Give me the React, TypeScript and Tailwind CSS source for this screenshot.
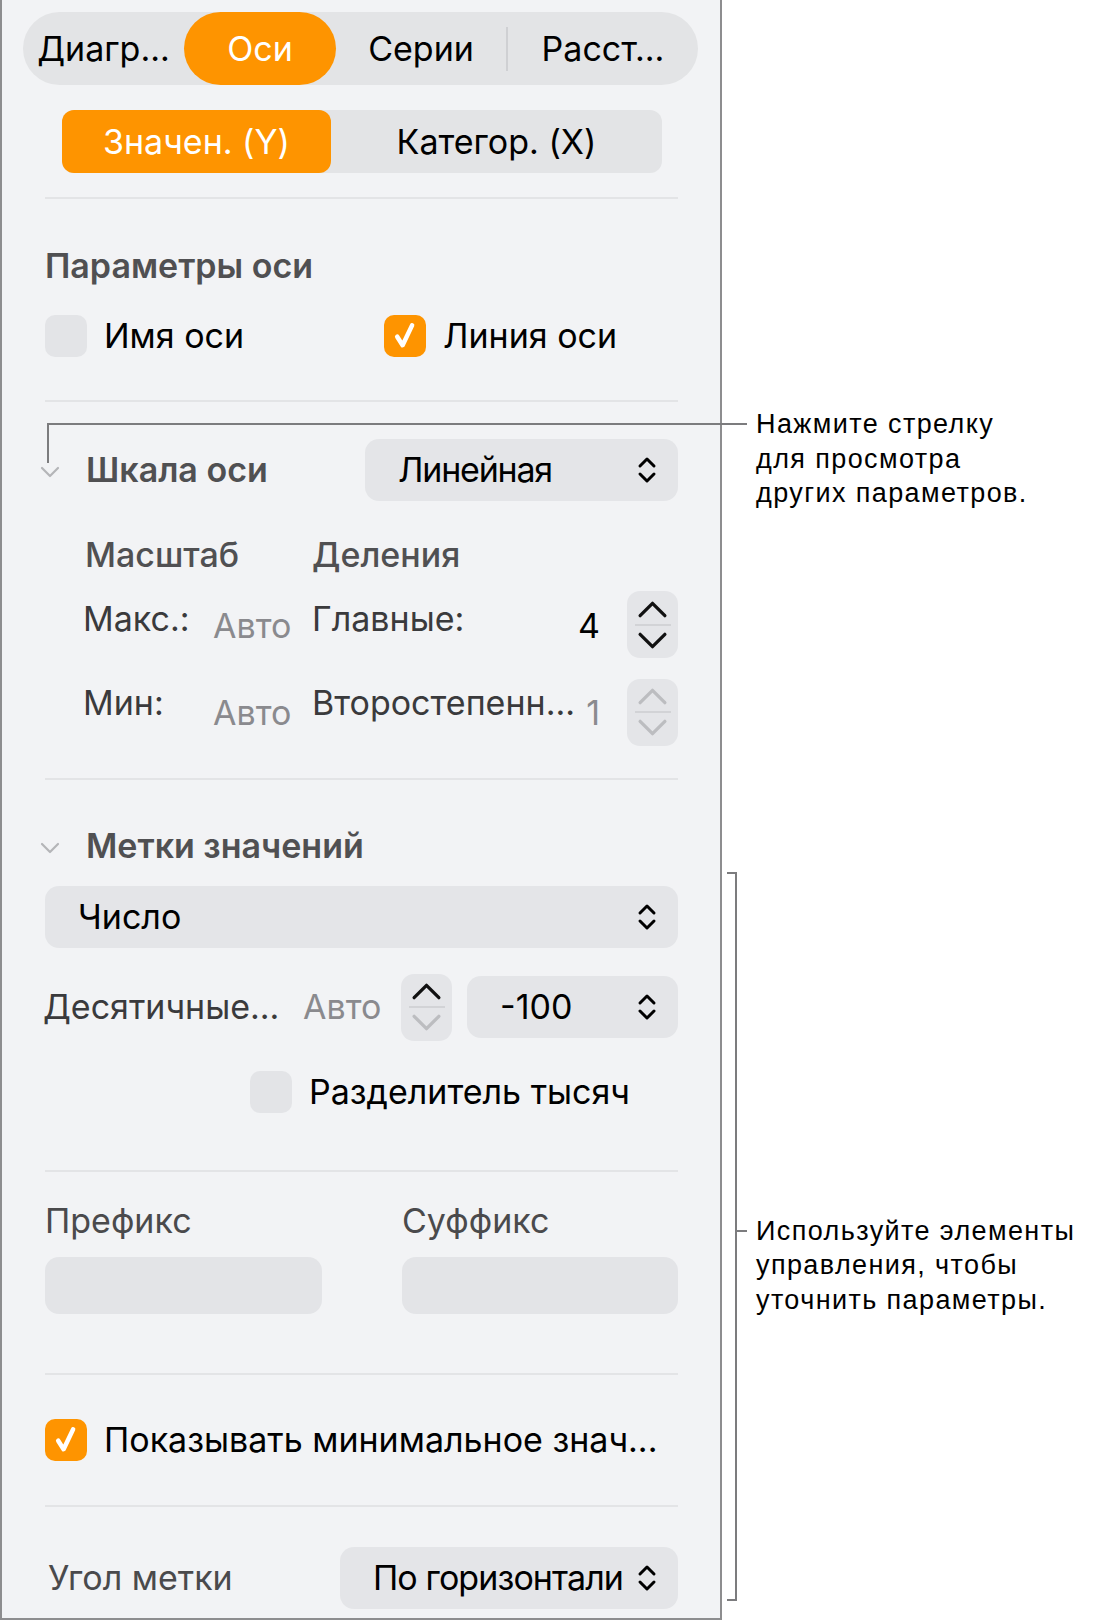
import type { ReactNode } from "react"

const PANEL_FONT = 'Inter, "Noto Sans", sans-serif'
const NOTE_FONT = '"Liberation Sans", Arial, sans-serif'

function UpDownIcon() {
  return (
    <svg
      viewBox="0 0 22 32"
      className="h-[32px] w-[22px] shrink-0"
      fill="none"
      stroke="currentColor"
      strokeWidth={3}
      strokeLinecap="round"
      strokeLinejoin="round"
    >
      <path d="M4 12 L11 5 L18 12" />
      <path d="M4 20 L11 27 L18 20" />
    </svg>
  )
}

function Disclosure() {
  return (
    <svg
      viewBox="0 0 22 14"
      className="h-[14px] w-[22px] shrink-0"
      fill="none"
      stroke="#b4b5b8"
      strokeWidth={2.2}
      strokeLinecap="round"
      strokeLinejoin="round"
    >
      <path d="M3 3 L11 11 L19 3" />
    </svg>
  )
}

function Stepper({ upDim = false, downDim = false }: { upDim?: boolean; downDim?: boolean }) {
  return (
    <div className="flex h-[67px] w-[51px] shrink-0 flex-col items-center justify-center rounded-[13px] bg-[#e4e5e8]">
      <svg
        viewBox="0 0 32 18"
        className="h-[19px] w-[33px]"
        fill="none"
        stroke={upDim ? "#bcbdc0" : "#111"}
        strokeWidth={3.2}
        strokeLinecap="round"
        strokeLinejoin="round"
      >
        <path d="M4 15 L16 3 L28 15" />
      </svg>
      <div className="my-[5px] h-[2px] w-[36px] bg-[#d2d3d6]" />
      <svg
        viewBox="0 0 32 18"
        className="h-[19px] w-[33px]"
        fill="none"
        stroke={downDim ? "#bcbdc0" : "#111"}
        strokeWidth={3.2}
        strokeLinecap="round"
        strokeLinejoin="round"
      >
        <path d="M4 3 L16 15 L28 3" />
      </svg>
    </div>
  )
}

function Checkbox({ checked = false }: { checked?: boolean }) {
  if (!checked) {
    return <span className="block h-[42px] w-[42px] shrink-0 rounded-[10px] bg-[#e3e4e7]" />
  }
  return (
    <span className="flex h-[42px] w-[42px] shrink-0 items-center justify-center rounded-[10px] bg-[#fe9400]">
      <svg
        viewBox="0 0 24 24"
        className="h-[34px] w-[34px]"
        fill="none"
        stroke="white"
        strokeWidth={3.2}
        strokeLinecap="round"
        strokeLinejoin="round"
      >
        <path d="M6.5 12.5 L10.3 18.5 L17 4.5" />
      </svg>
    </span>
  )
}

function Select({
  label,
  className = "",
  labelClassName = "",
}: {
  label: string
  className?: string
  labelClassName?: string
}) {
  return (
    <div
      className={`flex h-[62px] shrink-0 items-center justify-between rounded-[14px] bg-[#e4e5e8] pl-[33px] pr-[20px] text-black ${className}`}
    >
      <span className={`whitespace-nowrap ${labelClassName}`}>{label}</span>
      <UpDownIcon />
    </div>
  )
}

function Divider({ className = "" }: { className?: string }) {
  return <div className={`h-[2px] bg-[#e3e4e6] ${className}`} />
}

function Note({ children, className = "" }: { children: ReactNode; className?: string }) {
  return (
    <p
      className={`whitespace-nowrap text-[27px] leading-[34.5px] tracking-[1.4px] text-black ${className}`}
      style={{ fontFamily: NOTE_FONT }}
    >
      {children}
    </p>
  )
}

export default function App() {
  return (
    <div className="relative flex h-[1620px] w-[1101px] bg-white">
      {/* inspector panel */}
      <div
        className="flex h-[1620px] w-[722px] shrink-0 flex-col border-b-2 border-l-2 border-r-2 border-[#8d8d8f] bg-[#f2f3f5] pl-[43px] pr-[42px] text-[34px] leading-none"
        style={{ fontFamily: PANEL_FONT }}
      >
        {/* top tabs */}
        <div className="-ml-[22px] -mr-[20px] mt-[12px] flex h-[73px] items-center rounded-full bg-[#e3e4e6] text-black">
          <div className="flex w-[161px] justify-center">Диагр...</div>
          <div className="flex h-[73px] w-[152px] items-center justify-center rounded-full bg-[#fe9400] text-white">
            Оси
          </div>
          <div className="flex w-[170px] justify-center">Серии</div>
          <div className="h-[44px] w-[2px] bg-[#cfd0d3]" />
          <div className="flex flex-1 justify-center">Расст...</div>
        </div>

        {/* axis switch */}
        <div className="ml-[17px] mr-[16px] mt-[25px] flex h-[63px] items-center rounded-[12px] bg-[#e3e4e6]">
          <div className="flex h-[63px] w-[269px] items-center justify-center rounded-[12px] bg-[#fe9400] text-white">
            Значен. (Y)
          </div>
          <div className="flex flex-1 justify-center text-black">Категор. (X)</div>
        </div>

        <Divider className="mt-[24px]" />

        <div className="mt-[42px] flex h-[50px] items-center font-semibold text-[#505052]">
          Параметры оси
        </div>

        <div className="mt-[23px] grid h-[44px] grid-cols-[339px_1fr] items-center text-black">
          <div className="flex items-center gap-[17px]">
            <Checkbox />
            <span>Имя оси</span>
          </div>
          <div className="flex items-center gap-[17px]">
            <Checkbox checked />
            <span>Линия оси</span>
          </div>
        </div>

        <Divider className="mt-[42px]" />

        <div className="mt-[37px] flex h-[62px] items-center">
          <div className="-ml-[6px] mt-[4px]">
            <Disclosure />
          </div>
          <span className="ml-[25px] font-semibold text-[#505052]">Шкала оси</span>
          <Select label="Линейная" labelClassName="tracking-[-1.2px]" className="ml-auto w-[313px]" />
        </div>

        <div className="mt-[34px] flex h-[40px] items-center font-medium text-[#505052]">
          <span className="ml-[40px] w-[227px]">Масштаб</span>
          <span>Деления</span>
        </div>

        <div className="mt-[16px] flex h-[67px] items-center text-[#3a3a3c]">
          <span className="ml-[38px] w-[130px] pb-[12px]">Макс.:</span>
          <span className="w-[99px] pt-[3px] text-[#8a8a8e]">Авто</span>
          <span className="flex-1 pb-[12px]">Главные:</span>
          <span className="mr-[27px] pt-[3px] text-black">4</span>
          <Stepper />
        </div>

        <div className="mt-[21px] flex h-[66px] items-center text-[#3a3a3c]">
          <span className="ml-[38px] w-[130px] pb-[18px]">Мин:</span>
          <span className="w-[99px] pt-[1px] text-[#8a8a8e]">Авто</span>
          <span className="flex-1 whitespace-nowrap pb-[18px]">Второстепенн...</span>
          <span className="mr-[27px] pt-[1px] text-[#8a8a8e]">1</span>
          <Stepper upDim downDim />
        </div>

        <Divider className="mt-[33px]" />

        <div className="mt-[41px] flex h-[50px] items-center">
          <div className="-ml-[6px] mt-[4px]">
            <Disclosure />
          </div>
          <span className="ml-[25px] font-semibold text-[#505052]">Метки значений</span>
        </div>

        <Select label="Число" className="mt-[15px]" />

        <div className="mt-[26px] flex h-[66px] items-center">
          <span className="-ml-[2px] w-[260px] whitespace-nowrap text-[#3a3a3c]">Десятичные...</span>
          <span className="w-[98px] text-[#8a8a8e]">Авто</span>
          <Stepper downDim />
          <Select label="-100" className="ml-auto w-[211px]" />
        </div>

        <div className="mt-[31px] flex h-[42px] items-center gap-[17px] pl-[205px] text-black">
          <Checkbox />
          <span>Разделитель тысяч</span>
        </div>

        <Divider className="mt-[57px]" />

        <div className="mt-[29px] grid h-[40px] grid-cols-[357px_1fr] items-center text-[#4a4a4c]">
          <span>Префикс</span>
          <span>Суффикс</span>
        </div>

        <div className="mt-[16px] grid h-[57px] grid-cols-[277px_1fr] gap-[80px]">
          <div className="rounded-[14px] bg-[#e3e4e7]" />
          <div className="rounded-[14px] bg-[#e3e4e7]" />
        </div>

        <Divider className="mt-[59px]" />

        <div className="mt-[43px] flex h-[44px] items-center gap-[17px] text-black">
          <Checkbox checked />
          <span className="whitespace-nowrap">Показывать минимальное знач...</span>
        </div>

        <Divider className="mt-[43px]" />

        <div className="mt-[40px] flex h-[62px] items-center">
          <span className="ml-[3px] text-[#4a4a4c]">Угол метки</span>
          <Select
            label="По горизонтали"
            labelClassName="tracking-[-0.9px]"
            className="ml-auto w-[338px]"
          />
        </div>
      </div>

      {/* callout texts */}
      <div className="flex flex-col pl-[34px]">
        <Note className="mt-[407px]">
          Нажмите стрелку
          <br />
          для просмотра
          <br />
          других параметров.
        </Note>
        <Note className="mt-[703px]">
          Используйте элементы
          <br />
          управления, чтобы
          <br />
          уточнить параметры.
        </Note>
      </div>

      {/* callout lines */}
      <div className="absolute left-[48px] top-[423px] h-[2px] w-[699px] bg-[#7c7c7e]" />
      <div className="absolute left-[47px] top-[423px] h-[40px] w-[2px] bg-[#7c7c7e]" />
      <div className="absolute left-[735px] top-[872px] h-[729px] w-[2px] bg-[#7c7c7e]" />
      <div className="absolute left-[727px] top-[872px] h-[2px] w-[10px] bg-[#7c7c7e]" />
      <div className="absolute left-[727px] top-[1599px] h-[2px] w-[10px] bg-[#7c7c7e]" />
      <div className="absolute left-[735px] top-[1230px] h-[2px] w-[12px] bg-[#7c7c7e]" />
    </div>
  )
}
